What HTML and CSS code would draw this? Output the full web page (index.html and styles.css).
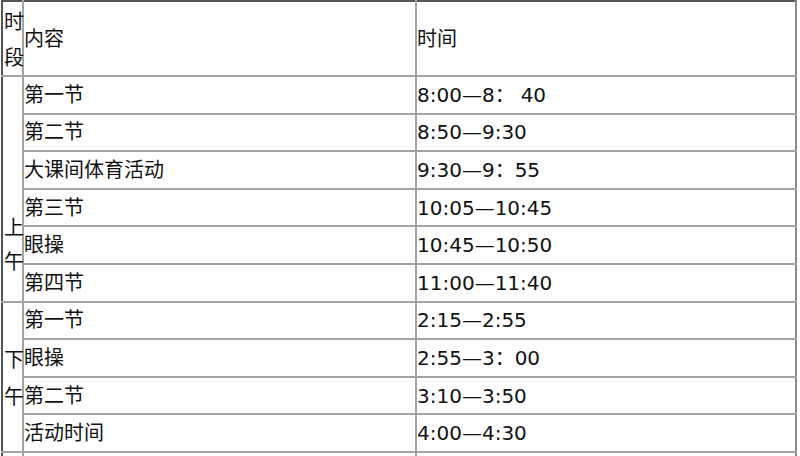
FILE: index.html
```html
<!DOCTYPE html>
<html lang="zh-CN">
<head>
<meta charset="utf-8">
<title>作息时间表</title>
<link rel="stylesheet" href="styles.css">
</head>
<body>
<table class="schedule">
  <colgroup>
    <col class="c-period">
    <col class="c-content">
    <col class="c-time">
  </colgroup>
  <tr class="head">
    <td class="period period-head">时段</td>
    <td>内容</td>
    <td>时间</td>
  </tr>
  <tr class="row">
    <td class="period period-am" rowspan="6">上午</td>
    <td>第一节</td>
    <td class="time">8:00—8：<span class="gap">40</span></td>
  </tr>
  <tr class="row"><td>第二节</td><td class="time">8:50—9:30</td></tr>
  <tr class="row"><td>大课间体育活动</td><td class="time">9:30—9：55</td></tr>
  <tr class="row"><td>第三节</td><td class="time">10:05—10:45</td></tr>
  <tr class="row"><td>眼操</td><td class="time">10:45—10:50</td></tr>
  <tr class="row"><td>第四节</td><td class="time">11:00—11:40</td></tr>
  <tr class="row">
    <td class="period period-pm" rowspan="4">下午</td>
    <td>第一节</td>
    <td class="time">2:15—2:55</td>
  </tr>
  <tr class="row"><td>眼操</td><td class="time">2:55—3：00</td></tr>
  <tr class="row"><td>第二节</td><td class="time">3:10—3:50</td></tr>
  <tr class="row"><td>活动时间</td><td class="time">4:00—4:30</td></tr>
  <tr class="row"><td class="period"></td><td></td><td></td></tr>
</table>
</body>
</html>
```
FILE: styles.css
```css
html, body {
  margin: 0;
  padding: 0;
  background: #fff;
  overflow: hidden;
}

.schedule {
  border-collapse: collapse;
  table-layout: fixed;
  width: 795px;
  margin: 0 0 0 1px;
  font-family: "DejaVu Sans", "Noto Sans CJK SC", sans-serif;
  font-size: 20px;
  color: #111;
}

.c-period { width: 21px; }
.c-content { width: 393px; }
.c-time { width: 380px; }

.schedule td {
  border: 2px solid #a3a3a3;
  padding: 0;
  vertical-align: middle;
  white-space: nowrap;
  line-height: 24px;
}

.schedule tr:first-child td { border-top-color: #555; }
.schedule td:first-child { border-left-color: #555; }
.schedule td:last-child { border-right-color: #8a8a8a; }

.head td { height: 73px; }
.row td { height: 35.6px; }

.schedule td.period {
  white-space: normal;
  word-break: break-all;
  padding: 0 0 0 1px;
  font-family: "Noto Sans CJK SC", sans-serif;
}

.schedule td.period-head {
  line-height: 36px;
}

.schedule td.period-am {
  line-height: 34px;
  padding-top: 110px;
}

.schedule td.period-pm {
  line-height: 37px;
}

.gap {
  margin-left: 6px;
}
```
